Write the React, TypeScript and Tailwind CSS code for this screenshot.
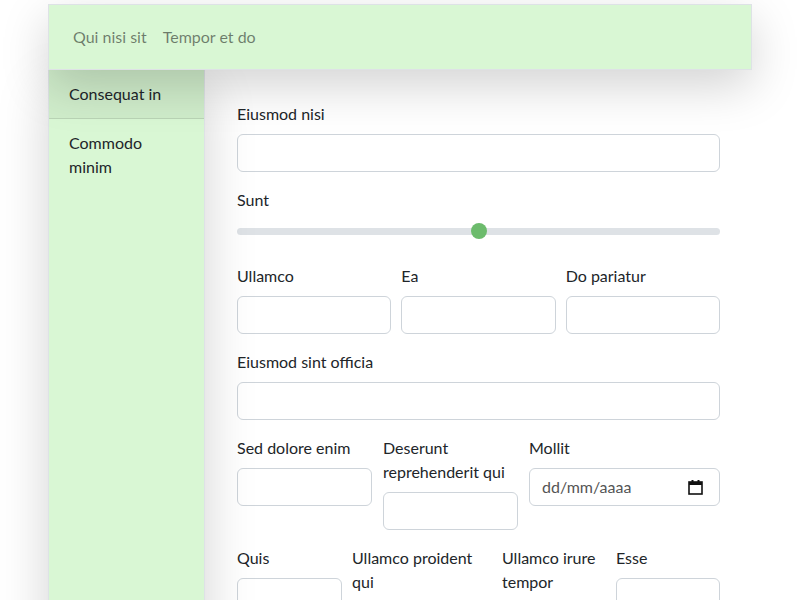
import React from 'react'

const Field = ({ label, className = '' }: { label: string; className?: string }) => (
    <div className={'flex flex-col ' + className}>
        <label className="mb-2 leading-6">{label}</label>
        <input type="text" className="h-[38px] w-full rounded-md border border-[#ced4da] bg-white px-3 outline-none" />
    </div>
)

const CalendarIcon = () => (
    <svg width="15" height="16" viewBox="0 0 15 16" fill="none">
        <rect x="1" y="3" width="13" height="12" stroke="#111" strokeWidth="1.6" fill="none" />
        <rect x="1" y="3" width="13" height="3" fill="#111" />
        <rect x="3.5" y="1" width="2" height="3" fill="#111" />
        <rect x="9.5" y="1" width="2" height="3" fill="#111" />
    </svg>
)

const App = () => {
    return (
        <div className="mx-auto mt-1 w-[704px] font-['Lato',sans-serif] text-base text-[#212529]">
            <nav className="relative z-10 flex h-[66px] items-center border border-[#dee2e6] bg-[#d9f7d4] px-4 shadow-[0_16px_48px_rgba(0,0,0,0.175)]">
                <a className="px-2 text-black/50">Qui nisi sit</a>
                <a className="px-2 text-black/50">Tempor et do</a>
            </nav>
            <div className="flex">
                <aside className="relative z-[1] w-[157px] shrink-0 border-x border-[#dee2e6] bg-[#d9f7d4] shadow-[0_16px_48px_rgba(0,0,0,0.175)]">
                    <div className="border-b border-black/10 bg-black/[0.04] px-5 py-3 leading-6">Consequat in</div>
                    <div className="px-5 py-3 leading-6">Commodo minim</div>
                </aside>
                <main className="flex flex-1 flex-col gap-4 bg-white px-8 pt-8 pb-8">
                    <Field label="Eiusmod nisi" />
                    <div className="flex flex-col">
                        <label className="mb-2 leading-6">Sunt</label>
                        <div className="relative mb-[6px] flex h-[22px] items-center">
                            <div className="h-[7px] w-full rounded-full bg-[#dee2e6]" />
                            <div className="absolute left-1/2 top-[3px] h-4 w-4 -translate-x-1/2 rounded-full bg-[#6cbb6c]" />
                        </div>
                    </div>
                    <div className="grid grid-cols-3 gap-x-[10px]">
                        <Field label="Ullamco" />
                        <Field label="Ea" />
                        <Field label="Do pariatur" />
                    </div>
                    <Field label="Eiusmod sint officia" />
                    <div className="grid grid-cols-[135px_135px_1fr] items-start gap-x-[11px]">
                        <Field label="Sed dolore enim" />
                        <Field label="Deserunt reprehenderit qui" />
                        <div className="flex flex-col">
                            <label className="mb-2 leading-6">Mollit</label>
                            <div className="flex h-[38px] items-center justify-between rounded-md border border-[#ced4da] bg-white pl-3 pr-4">
                                <span className="text-[#555]">dd/mm/aaaa</span>
                                <CalendarIcon />
                            </div>
                        </div>
                    </div>
                    <div className="grid grid-cols-[105px_140px_104px_1fr] items-start gap-x-[10px]">
                        <Field label="Quis" />
                        <Field label="Ullamco proident qui" />
                        <Field label="Ullamco irure tempor" />
                        <Field label="Esse" />
                    </div>
                </main>
            </div>
        </div>
    )
}

export default App
